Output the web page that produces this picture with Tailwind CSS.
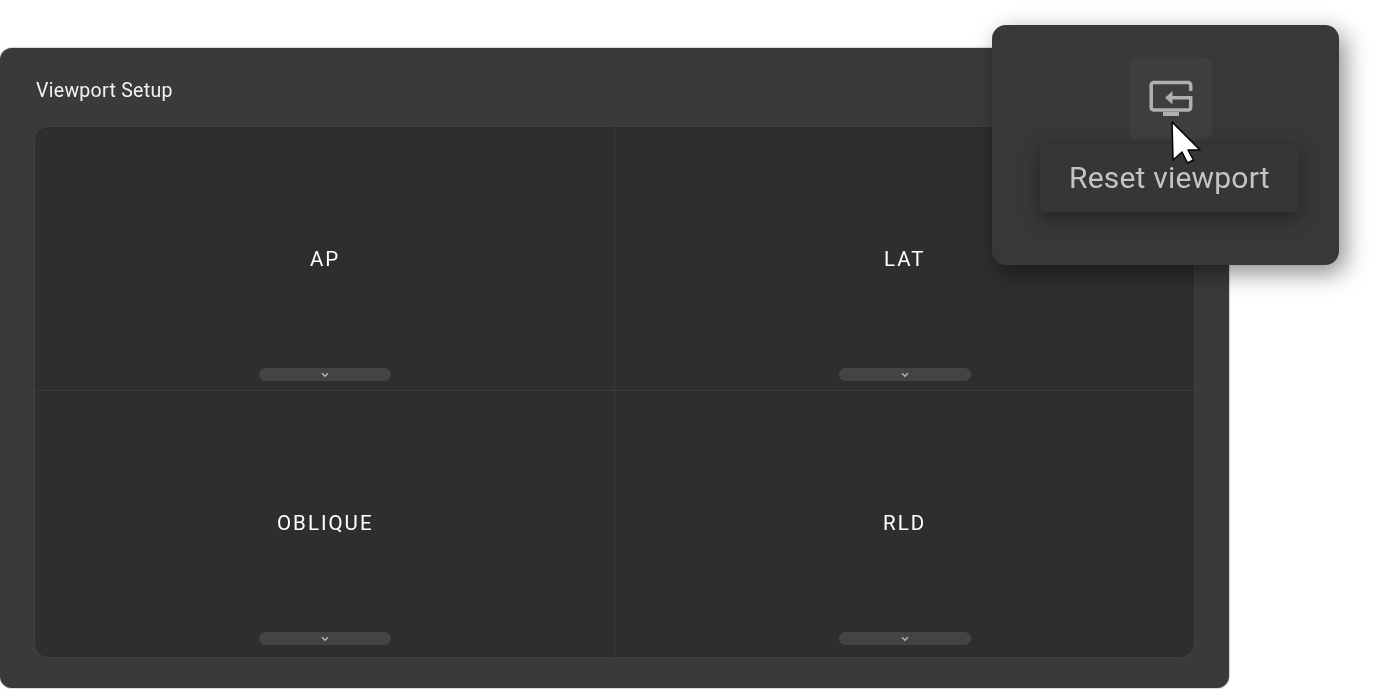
<!DOCTYPE html>
<html lang="en">
<head>
  <meta charset="UTF-8" />
  <meta name="viewport" content="width=device-width, initial-scale=1.0">
  <title>Viewport Setup</title>
  <script src="https://cdn.jsdelivr.net/npm/@tailwindcss/browser@4"></script>
</head>
<body class="bg-white font-['Roboto',sans-serif] overflow-hidden">
  <div class="relative w-[1379px] h-[689px] pt-[48px]">

    <!-- main panel -->
    <div class="w-[1229px] h-[640px] rounded-[12px] bg-[#3a3a3a] shadow-[0_0_2px_rgba(0,0,0,0.55)] flex flex-col px-[35px] pb-[31px]">
      <div class="h-[79px] flex items-center pt-[7px] pl-[1px] shrink-0">
        <h1 class="text-[19.5px] tracking-[0.3px] text-[#f2f2f2] will-change-transform">Viewport Setup</h1>
      </div>
      <div class="grid grid-cols-[580px_1fr] grid-rows-[264px_1fr] flex-1 rounded-[12px] bg-[#2e2e2e] shadow-[0_0_1px_rgba(255,255,255,0.25)]">
        <div class="relative flex items-center justify-center border-r border-b border-[#3a3a3a] pt-[2px] pl-[2px]">
          <span class="text-[20.5px] tracking-[2px] text-white will-change-transform">AP</span>
          <div class="absolute bottom-[9px] left-1/2 -translate-x-1/2 w-[132px] h-[13px] rounded-full bg-[#444444] flex items-center justify-center">
            <svg class="w-[8px] h-[6px]" viewBox="0 0 8 6" fill="none" stroke="#b5b5b5" stroke-width="1.4"><path d="M1 1.2 4 4.2 7 1.2"/></svg>
          </div>
        </div>
        <div class="relative flex items-center justify-center border-b border-[#3a3a3a] pt-[2px]">
          <span class="text-[20.5px] tracking-[2px] text-white will-change-transform">LAT</span>
          <div class="absolute bottom-[9px] left-1/2 -translate-x-1/2 w-[132px] h-[13px] rounded-full bg-[#444444] flex items-center justify-center">
            <svg class="w-[8px] h-[6px]" viewBox="0 0 8 6" fill="none" stroke="#b5b5b5" stroke-width="1.4"><path d="M1 1.2 4 4.2 7 1.2"/></svg>
          </div>
        </div>
        <div class="relative flex items-center justify-center border-r border-[#3a3a3a] pb-[2px] pl-[2px]">
          <span class="text-[20.5px] tracking-[2px] text-white will-change-transform">OBLIQUE</span>
          <div class="absolute bottom-[12px] left-1/2 -translate-x-1/2 w-[132px] h-[13px] rounded-full bg-[#444444] flex items-center justify-center">
            <svg class="w-[8px] h-[6px]" viewBox="0 0 8 6" fill="none" stroke="#b5b5b5" stroke-width="1.4"><path d="M1 1.2 4 4.2 7 1.2"/></svg>
          </div>
        </div>
        <div class="relative flex items-center justify-center pb-[2px]">
          <span class="text-[20.5px] tracking-[2px] text-white will-change-transform">RLD</span>
          <div class="absolute bottom-[12px] left-1/2 -translate-x-1/2 w-[132px] h-[13px] rounded-full bg-[#444444] flex items-center justify-center">
            <svg class="w-[8px] h-[6px]" viewBox="0 0 8 6" fill="none" stroke="#b5b5b5" stroke-width="1.4"><path d="M1 1.2 4 4.2 7 1.2"/></svg>
          </div>
        </div>
      </div>
    </div>

    <!-- popup over the panel -->
    <div class="absolute left-[992px] top-[25px] w-[347px] h-[239.500px] rounded-[14px] bg-[#383838] shadow-[6px_8px_24px_rgba(0,0,0,0.45)] flex flex-col items-center pt-[32px] pl-[10px]">
      <div class="w-[83px] h-[83px] rounded-[8px] bg-[#3e3e3e] flex items-center justify-center">
        <svg class="w-[44px] h-[37px]" viewBox="0 0 44 37" fill="none">
          <path d="M41.700 11V5A2.500 2.500 0 0 0 39.200 2.500H4.700A2.500 2.500 0 0 0 2.200 5V27.500A2.500 2.500 0 0 0 4.700 30H39.200A2.500 2.500 0 0 0 41.700 27.500V17.700H23" stroke="#b0b0b0" stroke-width="3.500"/>
          <path d="M23.500 11 16 17.700 23.500 24.500Z" fill="#b0b0b0"/>
          <rect x="14" y="32" width="16" height="4" fill="#b0b0b0"/>
        </svg>
      </div>
      <div class="mt-[4px] -ml-[2px] w-[259px] h-[68px] rounded-[6px] bg-[#363636] shadow-[0_6px_18px_rgba(0,0,0,0.4)] flex items-center justify-center pb-[2px]">
        <span class="text-[30px] tracking-[0.2px] text-[#c4c4c4] will-change-transform">Reset viewport</span>
      </div>
    </div>

    <!-- cursor -->
    <svg class="absolute left-[1170px] top-[120px] w-[32px] h-[46px]" viewBox="0 0 32 46">
      <path d="M2 2 3 40 12 32 17.500 43 23.500 40 18 30 30 30Z" fill="#ffffff" stroke="#000000" stroke-width="1.500" stroke-linejoin="round"/>
    </svg>
  </div>
</body>
</html>
